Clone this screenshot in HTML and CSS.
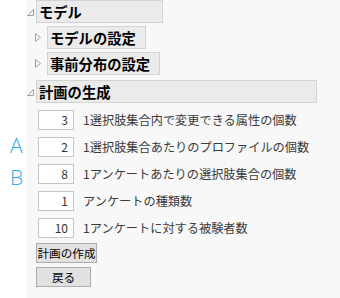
FILE: index.html
```html
<!DOCTYPE html>
<html lang="ja">
<head>
    <meta charset="UTF-8">
    <title>計画の生成</title>
    <link rel="stylesheet" href="styles.css">
</head>
<body>
    <span class="mark mark-a">A</span>
    <span class="mark mark-b">B</span>

    <div class="panel">
        <div class="head">
            <span class="twisty"><svg width="7" height="7" viewBox="0 0 7 7"><polygon points="6.5,0.5 6.5,6.5 0.5,6.5" fill="none" stroke="#a0a0a0"/></svg></span>
            <span class="title title-model">モデル</span>
        </div>
        <div class="head sub">
            <span class="twisty"><svg width="6" height="9" viewBox="0 0 6 9"><polygon points="0.5,0.5 5.5,4.5 0.5,8.5" fill="none" stroke="#a0a0a0"/></svg></span>
            <span class="title">モデルの設定</span>
        </div>
        <div class="head sub">
            <span class="twisty"><svg width="6" height="9" viewBox="0 0 6 9"><polygon points="0.5,0.5 5.5,4.5 0.5,8.5" fill="none" stroke="#a0a0a0"/></svg></span>
            <span class="title">事前分布の設定</span>
        </div>

        <div class="head plan">
            <span class="twisty"><svg width="7" height="7" viewBox="0 0 7 7"><polygon points="6.5,0.5 6.5,6.5 0.5,6.5" fill="none" stroke="#a0a0a0"/></svg></span>
            <span class="title title-plan">計画の生成</span>
        </div>

        <div class="fields">
            <div class="row"><span class="num">3</span><span class="label">1選択肢集合内で変更できる属性の個数</span></div>
            <div class="row"><span class="num">2</span><span class="label">1選択肢集合あたりのプロファイルの個数</span></div>
            <div class="row"><span class="num">8</span><span class="label">1アンケートあたりの選択肢集合の個数</span></div>
            <div class="row"><span class="num">1</span><span class="label">アンケートの種類数</span></div>
            <div class="row"><span class="num">10</span><span class="label">1アンケートに対する被験者数</span></div>
        </div>

        <div class="buttons">
            <button class="btn btn-make">計画の作成</button>
            <button class="btn btn-back">戻る</button>
        </div>
    </div>
</body>
</html>
```

FILE: styles.css
```css
body { margin: 0; background: #fff; font-family: "Noto Sans CJK JP", "Noto Sans", sans-serif; position: relative; height: 298px; overflow: hidden; }
.panel { margin-left: 26px; background: #f8f8f8; height: 298px; padding-top: 0; }

.head { display: flex; align-items: center; height: 23px; }
.head + .head { margin-top: 3px; }
.head.plan { margin-top: 5px; }
.twisty { width: 9px; display: flex; align-items: center; padding-left: 1px; padding-top: 2px; }
.sub { margin-left: 9px; }
.sub .twisty { width: 12px; padding-left: 0; padding-top: 0; }
.title { box-sizing: border-box; height: 23px; line-height: 21px; padding: 0 9px 0 2px; background: #ebebeb; border: 1px solid #d3d3d3; font-size: 14.3px; font-weight: bold; color: #000; white-space: nowrap; }
.title-model { width: 127px; }
.title-plan { width: 281px; }

.fields { display: flex; flex-direction: column; gap: 7px; margin-top: 7px; margin-left: 12px; }
.row { display: flex; align-items: center; height: 20px; }
.num { box-sizing: border-box; width: 36px; height: 20px; background: #fff; border: 1px solid #c6c6c6; text-align: right; padding-right: 5px; font-size: 12px; line-height: 18px; color: #333; }
.label { margin-left: 9px; font-size: 12.2px; color: #3a3a3a; white-space: nowrap; }

.buttons { display: flex; flex-direction: column; align-items: flex-start; gap: 4px; margin-top: 5px; margin-left: 10px; }
.btn { box-sizing: border-box; height: 20px; padding: 0; background: #e1e1e1; border: 1px solid #adadad; border-radius: 0; font-family: inherit; font-size: 11.6px; line-height: 17px; color: #000; white-space: nowrap; overflow: hidden; text-align: center; }
.btn-make { width: 61px; }
.btn-back { width: 55px; }

.mark { position: absolute; left: 10px; font-family: "Open Sans", "DejaVu Sans", sans-serif; font-weight: 300; font-size: 21px; line-height: 21px; color: #2aa9ee; }
.mark-a { top: 135px; }
.mark-b { top: 167px; }
```
